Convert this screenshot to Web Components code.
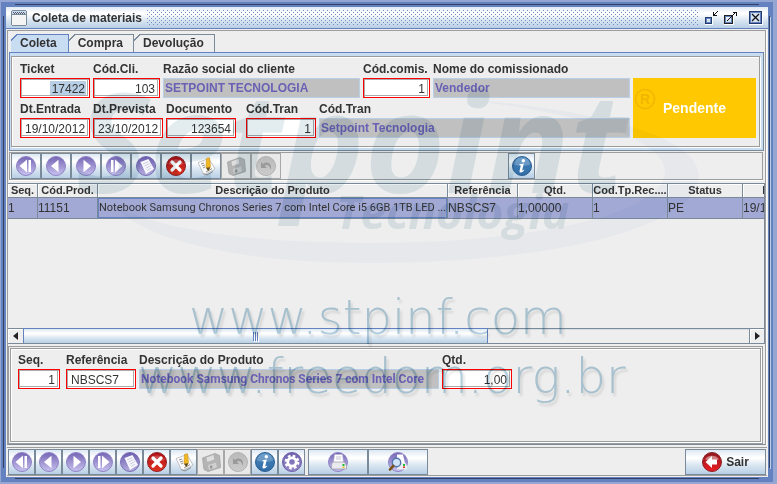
<!DOCTYPE html>
<html lang="pt-BR">
<head>
<meta charset="utf-8">
<title>Coleta de materiais</title>
<style>
:root {
  --edge: #6382bf;
  --slate: #7a8a99;
  --line: #9c9c9c;
  --face: #eeeeee;
  --pale: #c8ddf2;
  --sky: #b8cfe5;
  --ink: #333333;
}
html, body { height: 100%; }
body {
  margin: 0;
  background: #95a6d2;
  color: var(--ink);
  font: 12px "Liberation Sans", Arial, sans-serif;
  overflow: hidden;
}
</style>
</head>
<body>
<coleta-app></coleta-app>

<script>
const define = (name, html, setup) => customElements.define(name, class extends HTMLElement {
  connectedCallback() {
    if (this.shadowRoot) return;
    const root = this.attachShadow({ mode: 'open' });
    const t = document.createElement('template');
    t.innerHTML = typeof html === 'function' ? html(this) : html;
    root.append(t.content.cloneNode(true));
    if (setup) setup(this, root);
  }
});

const disc = (hi, lo, rim) => `
  <defs><linearGradient id="g" x1="0" y1="0" x2="0" y2="1"><stop offset="0" stop-color="${hi}"/><stop offset="1" stop-color="${lo}"/></linearGradient></defs>
  <circle cx="10" cy="10" r="9.5" fill="url(#g)" stroke="${rim}" stroke-width="1"/>`;
const violet = disc('#7565b4', '#c9c2ee', '#8e84c6');
const sheet = '<path d="M4.500 6 12.500 3l5.500 10-8 5z" fill="#f6f8fd"/><path d="M7.200 7.800l5-2M8.500 10l5.200-2.500M9.800 12.300l5.200-2.800M11 14.500l4-2.300" stroke="#b5b6cc" stroke-width=".7"/>';
const icons = {
  first: violet + '<path d="M11 3.500v13L3.500 10z" fill="#fff"/><path d="M12.500 4h2.500v12h-2.500z" fill="#fff"/>',
  prev: violet + '<path d="M12.500 3.800v12.400L5 10z" fill="#fff"/>',
  next: violet + '<path d="M7.500 3.800v12.400L15 10z" fill="#fff"/>',
  last: violet + '<path d="M9 3.500v13l7.500-6.500z" fill="#fff"/><path d="M5 4h2.500v12H5z" fill="#fff"/>',
  sheet: disc('#6a5bad', '#b5addf', '#7a6fb5') + sheet,
  cancel: disc('#b01018', '#e0321e', '#93222a') + '<path d="M2.500 8a8 7 0 0 1 15 0Q10 11 2.500 8z" fill="#fff" opacity=".22"/><path d="M6 6l8 8M14 6l-8 8" stroke="#fff" stroke-width="3.200" stroke-linecap="round"/>',
  edit: '<path d="M2 6.500 13 2.500l6 10.500L8 19z" fill="#fbfbfb" stroke="#b5b5b5" stroke-width=".8"/><path d="M5 8l3-1M6 10l3-1M7 12l2-1M10 16l6-3.500" stroke="#909090"/><path d="M10.500 2.500l3-.8 1 9-2.200 4-2.300-3.400z" fill="#f2b822" stroke="#c98d12" stroke-width=".6"/><path d="M10.200 11.800l2 3.400 2-4z" fill="#5a4a35"/><path d="M7.500 17.500 11 19l6-3.500" stroke="#777" fill="none" stroke-width=".8"/>',
  save: '<path d="M1.500 6 14 1.500l4.500 2 1 12L7 19.500l-4-2z" fill="#b4b4b4" stroke="#a2a2a2" stroke-width=".8"/><path d="M5.500 5.500l7-2.500.8 4.500-7 2.500z" fill="#dedede"/><path d="M7 13l8-2.500.8 5-7.800 2.500z" fill="#cfcfcf"/><path d="M9 14l2-.7.4 2.700-2 .7z" fill="#8f8f8f"/>',
  undo: disc('#b9b9b9', '#cccccc', '#b2b2b2') + '<path d="M5 6v6h6l-2.300-2.200C11 8 14 9 14.500 14 17 8 11 4.500 7 8z" fill="#9a9a9a"/>',
  info: disc('#4a86bf', '#2f6ca6', '#2d5f92') + '<path d="M2 8.500a8 7 0 0 1 16 0Q10 11 2 8.500z" fill="#fff" opacity=".22"/><circle cx="11.300" cy="4.800" r="1.700" fill="#fff"/><path d="M7.500 8.200l4.300-.7-1.600 6.700q0 .8 1.800-.6l.3.600q-1.800 2.200-3.600 2.200-1.500 0-1.200-1.500L8.800 9.500l-1.500-.4z" fill="#fff"/>',
  gear: disc('#6f60b0', '#958ac8', '#6c60a8') + '<g fill="none" stroke="#fff"><circle cx="10" cy="10" r="4.200" stroke-width="2.800"/><circle cx="10" cy="10" r="6.200" stroke-width="2.400" stroke-dasharray="2.600 2.269"/></g>',
  print: violet + '<path d="M6.500 2.500h8l1 8h-10z" fill="#fff" stroke="#b8b4cc" stroke-width=".6"/><path d="M8 5h5M8 7h5" stroke="#b5b5c8" stroke-width=".8"/><path d="M4.500 10h12l2 3.500v3.500h-15v-4z" fill="#e9e9ee" stroke="#9b98a8" stroke-width=".7"/><path d="M14.500 12h2v2h-2z" fill="#1fbd3a"/><path d="M14.500 14.500h2v1.500h-2z" fill="#e8c020"/>',
  preview: violet + '<path d="M9 2.500h6l2 9H9z" fill="#fff"/><path d="M10 11h7.500l1.500 3v3.500H9z" fill="#ececf1"/><circle cx="8.500" cy="10.500" r="4.200" fill="#cfe4f6" stroke="#5474ad" stroke-width="1.400"/><path d="M5.300 13.800 2 17.500" stroke="#7a5312" stroke-width="2.600" stroke-linecap="round"/><path d="M15 12h2v2h-2z" fill="#1fbd3a"/><path d="M15 14.500h2v1.500h-2z" fill="#dd2f2f"/>',
  exit: disc('#8d1820', '#ee1c22', '#8b2028') + '<path d="M3 7.500a7.500 6 0 0 1 14 0Q10 9 3 7.500z" fill="#fff" opacity=".45"/><path d="M3.500 10 10 4v3.500h5v5h-5V16z" fill="#fff"/>'
};

define('glyph-icon', el => `
<style>:host{display:block;width:20px;height:20px}svg{display:block;width:100%;height:100%}</style>
<svg viewBox="0 0 20 20" fill="none" aria-hidden="true">${icons[el.getAttribute('name')]}</svg>`);

define('tool-button', el => `
<style>
:host{display:block;flex:none;width:27px;height:26px}
:host([size=roomy]){width:30px}
:host([size=wide]){width:60px}
:host([size=exit]){width:81px}
button{width:100%;height:100%;box-sizing:border-box;margin:0;padding:0;border:1px solid var(--slate);
 display:flex;align-items:center;justify-content:center;gap:4px;color:inherit;font:bold 12px "Liberation Sans",Arial,sans-serif;
 background:linear-gradient(#dde8f3,#fff 30%,#fff 34%,#dbe7f2 62%,#b8cfe5)}
button:disabled{background:#e9e9e9;border-color:#a8a8a8}
</style>
<button type="button" aria-label="${el.getAttribute('label')}"${el.hasAttribute('disabled') ? ' disabled' : ''}><glyph-icon name="${el.getAttribute('icon')}"></glyph-icon><slot></slot></button>`);

define('form-field', el => {
  const a = n => el.getAttribute(n) || '';
  return `
<style>
:host{display:block;flex:0 0 70px;min-width:0}
:host([size=tiny]){flex-basis:42px}
:host([size=small]){flex-basis:67px}
:host([size=long]){flex-basis:300px}
:host([grow]){flex:1 1 0}
:host([lead]){margin-left:7px}
label{display:block;height:14px;line-height:14px;margin-bottom:2px;font-weight:bold;white-space:nowrap}
input{display:block;width:100%;height:20px;box-sizing:border-box;margin:0;padding:2px 4px 0;border:1px solid #f00;border-radius:0;outline:0;
 background:#fff;color:var(--ink);font:12px "Liberation Sans",Arial,sans-serif;
 box-shadow:inset 1px 1px #aaa,inset -1px -1px #fff,inset -2px -2px #aaa}
:host([numeric]) input{text-align:right}
:host([lookup]) input{border-color:var(--sky);background:#c0c0c0;box-shadow:none;padding:0 1px;color:#6a60b4;font-weight:bold}
:host([size=long]) input{font-family:Roboto,"Liberation Sans",sans-serif}
:host([marked]) input{background:linear-gradient(#b8cfe5,#b8cfe5) right 3px center/36px 14px no-repeat #fff}
</style>
<label for="f">${a('label')}</label>
<input id="f" type="text" value="${a('value')}"${el.hasAttribute('lookup') ? ' readonly' : ''}>`;
});

define('etched-panel', `
<style>
:host{display:block;box-sizing:border-box;border:1px solid var(--line);box-shadow:inset 1px 1px #fff,1px 1px #fff;background:var(--face)}
</style><slot></slot>`);

define('field-row', `
<style>:host{display:flex;gap:3px;margin-bottom:4px}:host(:last-child){margin-bottom:0}</style><slot></slot>`);

define('status-badge', `
<style>:host{flex:0 0 123px;margin-top:16px;display:flex;align-items:center;justify-content:center;background:#ffc800;color:#fff;font:bold 14px "Liberation Sans",Arial,sans-serif}</style><slot></slot>`);

define('title-bar', `
<style>
:host{display:flex;align-items:center;gap:5px;height:21px;padding:0 4px 0 5px;border-bottom:1px solid var(--edge);
 background:linear-gradient(#dfe9f4,#fff 28%,#fff 32%,#dbe7f2 62%,#b8cfe5)}
h1{margin:0;font:bold 12px "Liberation Sans",Arial,sans-serif;white-space:nowrap}
.bumps{flex:1;height:16px;background:
 radial-gradient(circle at 0.5px 0.5px,#6f8cc8 0.6px,transparent 0.7px) 0 0/4px 4px,
 radial-gradient(circle at 0.5px 0.5px,#6f8cc8 0.6px,transparent 0.7px) 2px 2px/4px 4px}
.controls{display:flex;gap:3px}
button{width:16px;height:16px;padding:0;border:0;background:none}
.controls button:last-child{margin-left:6px}
svg{display:block}
</style>
<svg width="16" height="16" viewBox="0 0 16 16" shape-rendering="crispEdges" aria-hidden="true"><path d="M1 0h14v1h1v14h-1v1H1v-1H0V1h1z" fill="#7a8a99"/><path d="M1 1h14v4H1z" fill="#c9dbee"/><path d="M2 2h1v1H2zM4 2h1v1H4zM6 2h1v1H6zM8 2h1v1H8zM10 2h1v1h-1zM12 2h1v1h-1zM3 3h1v1H3zM5 3h1v1H5zM7 3h1v1H7zM9 3h1v1H9zM11 3h1v1h-1zM13 3h1v1h-1z" fill="#556"/><path d="M1 4h14v1H1z" fill="#7a8a99"/><path d="M1 5h14v10H1z" fill="#f4f4f4"/></svg>
<h1><slot></slot></h1>
<div class="bumps"></div>
<div class="controls">
<button type="button" aria-label="Minimizar"><svg width="16" height="16" viewBox="0 0 16 16" shape-rendering="crispEdges" fill="none"><path d="M1.500 7.500h6v6h-6z" stroke="#233b6e"/><path d="M2.500 8.500h4v4h-4z" stroke="#6382bf"/><path d="M1 14.500h8M8.500 7v8" stroke="#fff"/><path d="M9.500 2v3.500H13M10 5l4-4" stroke="#111"/></svg></button>
<button type="button" aria-label="Maximizar"><svg width="16" height="16" viewBox="0 0 16 16" shape-rendering="crispEdges" fill="none"><path d="M1.500 5.500h8v8h-8z" stroke="#222"/><path d="M2.500 6.500h6v6h-6z" stroke="#6382bf"/><path d="M1 14.500h10M10.500 6v9" stroke="#fff"/><path d="M4 11l8-8M10 2.500h3.500V6" stroke="#111"/></svg></button>
<button type="button" aria-label="Fechar"><svg width="16" height="16" viewBox="0 0 16 16" shape-rendering="crispEdges" fill="none"><path d="M1.500 1.500h12v12h-12z" stroke="#233b6e" fill="#d5e3f1"/><path d="M2.500 2.500h10v10h-10z" stroke="#6382bf"/><path d="M1 14.500h14M14.500 2v13" stroke="#fff"/><path d="M4 4l7 7M11 4l-7 7" stroke="#111" stroke-width="1.300" shape-rendering="auto"/></svg></button>
</div>`);

define('tab-strip', `
<style>
:host{display:block;padding:3px 4px 0 3px}
nav{display:flex}
button{--c:var(--slate);--f:#eee;flex:none;height:18px;margin:0;border:0;padding:0 11px 0 9px;color:inherit;font:bold 12px/18px "Liberation Sans",Arial,sans-serif;
 background:
 linear-gradient(135deg,#eee 4px,var(--c) 4px 5px,transparent 5px) 0 0/8px 8px no-repeat,
 linear-gradient(var(--c),var(--c)) 6px 0/100% 1px no-repeat,
 linear-gradient(var(--c),var(--c)) 100% 0/1px 100% no-repeat,
 linear-gradient(var(--f),var(--f))}
button[aria-selected=true]{--c:var(--edge);--f:var(--pale);padding-right:12px;box-shadow:0 1px var(--pale)}
</style>
<nav role="tablist">
<button type="button" role="tab" aria-selected="true">Coleta</button>
<button type="button" role="tab" aria-selected="false">Compra</button>
<button type="button" role="tab" aria-selected="false">Devolução</button>
</nav>`);

define('button-row', `
<style>:host{display:flex}</style><slot></slot>`);

define('data-grid', `
<style>
:host{display:block;flex:1;min-height:0;overflow:hidden;border-right:1px solid var(--slate);border-top:1px solid var(--slate)}
table{width:810px;table-layout:fixed;border-collapse:separate;border-spacing:0}
th,td{box-sizing:border-box;overflow:hidden;white-space:nowrap;padding:0;border:0 solid var(--slate);border-width:0 1px 1px 0}
th{height:14px;font:bold 11px/13px "Liberation Sans",Arial,sans-serif;box-shadow:inset 1px 1px #fff}
td{height:21px;background:#a2a9d5;line-height:20px}
td.cursor{box-shadow:inset 0 0 0 1px var(--edge);padding:0 1px;font-family:Roboto,"Liberation Sans",sans-serif;font-size:11px}
</style>
<table>
<colgroup><col style="width:30px"><col style="width:60px"><col style="width:350px"><col style="width:70px"><col style="width:75px"><col style="width:75px"><col style="width:75px"><col style="width:75px"></colgroup>
<thead><tr><th>Seq.</th><th>Cód.Prod.</th><th>Descrição do Produto</th><th>Referência</th><th>Qtd.</th><th>Cod.Tp.Rec....</th><th>Status</th><th>Dt.Ent.</th></tr></thead>
<tbody><tr><td>1</td><td>11151</td><td class="cursor">Notebook Samsung Chronos Series 7 com Intel Core i5 6GB 1TB LED ...</td><td>NBSCS7</td><td>1,00000</td><td>1</td><td>PE</td><td>19/10/2012</td></tr></tbody>
</table>`);

define('scroll-track', `
<style>
:host{display:flex;height:16px;box-sizing:border-box;border:1px solid var(--slate);border-left:0}
button{flex:0 0 15px;padding:0;border:0;background:var(--face);display:flex;align-items:center;justify-content:center;box-shadow:inset 1px 1px #fff}
button:first-child{border-right:1px solid var(--slate)}
button:last-child{border-left:1px solid var(--slate)}
.track{flex:1;display:flex;box-shadow:inset 0 1px #d5dde5}
.thumb{width:64%;margin-top:-1px;border:1px solid var(--edge);border-bottom:0;box-sizing:border-box;display:flex;align-items:center;justify-content:center;gap:1px;
 background:linear-gradient(#dde8f3,#fff 30%,#fff 34%,#dbe7f2 62%,#b8cfe5)}
i{width:1px;height:9px;background:var(--edge);box-shadow:1px 1px #fff}
</style>
<button type="button" aria-label="Rolar para a esquerda"><svg width="5" height="8" viewBox="0 0 5 8"><path d="M5 0v8L0 4z" fill="#222"/></svg></button>
<div class="track"><div class="thumb"><i></i><i></i><i></i></div></div>
<button type="button" aria-label="Rolar para a direita"><svg width="5" height="8" viewBox="0 0 5 8"><path d="M0 0v8l5-4z" fill="#222"/></svg></button>`);

define('site-watermark', `
<style>
:host{position:absolute;inset:0;pointer-events:none;mix-blend-mode:multiply}
svg{display:block;width:100%;height:100%}
.logo{font-family:"Open Sans","Noto Sans",sans-serif;font-weight:bold;font-style:italic;fill:#e3ecef}
.url{font-family:"DejaVu Sans Light","DejaVu Sans",sans-serif;font-weight:200;font-size:48px;fill:#b4cfdd;filter:drop-shadow(2px 3px 1px #e2e2e2)}
.mark{font:bold 14px "Liberation Sans",sans-serif;fill:#efead6}
</style>
<svg viewBox="0 0 777 484" aria-hidden="true">
<path d="M443 98C560 104 699 130 699 176C699 225 560 263 370 263C255 263 150 245 112 205C165 232 260 243 370 243C540 243 665 212 665 172C665 135 560 108 443 98z" fill="#f7f9fd"/>
<text class="logo" x="76" y="193" font-size="138">Setpoint</text>
<text class="logo" x="336" y="229" font-size="46">Tecnologia</text>
<circle cx="645" cy="99" r="9.500" fill="none" stroke="#efead6" stroke-width="1.500"/>
<text class="mark" x="645" y="104" text-anchor="middle">R</text>
<text class="url" x="189" y="334">www.stpinf.com</text>
<text class="url" x="138" y="393">www.freedom.org.br</text>
</svg>`);

const nav = size => `
<tool-button size="${size}" icon="first" label="Primeiro"></tool-button>
<tool-button size="${size}" icon="prev" label="Anterior"></tool-button>
<tool-button size="${size}" icon="next" label="Próximo"></tool-button>
<tool-button size="${size}" icon="last" label="Último"></tool-button>
<tool-button size="${size}" icon="sheet" label="Novo"></tool-button>
<tool-button size="${size}" icon="cancel" label="Excluir"></tool-button>
<tool-button size="${size}" icon="edit" label="Editar"></tool-button>
<tool-button size="${size}" icon="save" label="Salvar" disabled></tool-button>
<tool-button size="${size}" icon="undo" label="Cancelar" disabled></tool-button>`;

define('coleta-app', `
<style>
:host{display:block;position:relative;height:100vh;box-sizing:border-box;padding:2px 4px 2px 1px}
.frame{height:100%;box-sizing:border-box;padding:5px;display:flex;flex-direction:column;background:
 linear-gradient(#33405f,#33405f) 14px 2px/calc(100% - 28px) 1px no-repeat,
 linear-gradient(#33405f,#33405f) 14px calc(100% - 3px)/calc(100% - 28px) 1px no-repeat,
 linear-gradient(#33405f,#33405f) 2px 14px/1px calc(100% - 28px) no-repeat,
 linear-gradient(#33405f,#33405f) calc(100% - 3px) 14px/1px calc(100% - 28px) no-repeat,
 linear-gradient(#b8cfe5,#b8cfe5) calc(100% - 2px) 15px/1px calc(100% - 28px) no-repeat,
 var(--edge)}
.client{flex:1;min-height:0;display:flex;flex-direction:column;background:var(--face);padding:1px}
.upper{flex:1;min-height:0;display:flex;flex-direction:column;border:1px solid var(--line);border-bottom-color:var(--slate);margin-right:1px;box-shadow:1px 0 #fff}
.tabbody{border:1px solid var(--edge);border-right-color:var(--slate);border-bottom-color:var(--slate);margin:0 1px;padding:3px 3px 3px 1px;background:var(--pale)}
.tabbody etched-panel{padding:5px 3px 8px 8px}
.form{display:flex;gap:3px}
.rows{flex:1;min-width:0}
.tools{display:flex;margin:1px 2px 1px 1px;border:1px solid var(--line);padding:0 0 0 1px;box-shadow:0 1px #fff}
.tools button-row+button-row{margin-left:227px}
.gridbox{flex:1;min-height:0;display:flex;flex-direction:column;margin-top:2px}
.lower{flex:none;margin-top:2px;border:1px solid var(--line);padding:1px;height:98px;box-sizing:border-box;margin-right:2px}
.lower etched-panel{height:100%;padding:4px 7px}
.bar{display:flex;margin-top:2px;padding:1px 1px 0 1px;border-top:1px solid var(--line);border-bottom:1px solid var(--line)}
.bar .print{margin-left:3px}
.bar .exit{margin-left:auto}
</style>
<main class="frame">
<title-bar>Coleta de materiais</title-bar>
<div class="client">
 <section class="upper">
  <tab-strip></tab-strip>
  <div class="tabbody"><etched-panel><div class="form">
   <div class="rows">
    <field-row>
     <form-field label="Ticket" value="17422" numeric marked></form-field>
     <form-field size="small" label="Cód.Cli." value="103" numeric></form-field>
     <form-field grow lookup label="Razão social do cliente" value="SETPOINT TECNOLOGIA"></form-field>
     <form-field size="small" label="Cód.comis." value="1" numeric></form-field>
     <form-field grow lookup label="Nome do comissionado" value="Vendedor"></form-field>
    </field-row>
    <field-row>
     <form-field label="Dt.Entrada" value="19/10/2012" numeric></form-field>
     <form-field label="Dt.Prevista" value="23/10/2012" numeric></form-field>
     <form-field label="Documento" value="123654" numeric></form-field>
     <form-field lead label="Cód.Tran" value="1" numeric></form-field>
     <form-field grow lookup label="Cód.Tran" value="Setpoint Tecnologia"></form-field>
    </field-row>
   </div>
   <status-badge>Pendente</status-badge>
  </div></etched-panel></div>
  <div class="tools"><button-row>${nav('roomy')}</button-row><button-row><tool-button icon="info" label="Informações"></tool-button></button-row></div>
  <div class="gridbox"><data-grid></data-grid><scroll-track></scroll-track></div>
  <div class="lower"><etched-panel><field-row>
   <form-field size="tiny" label="Seq." value="1" numeric></form-field>
   <form-field style="margin-left:3px" label="Referência" value="NBSCS7"></form-field>
   <form-field size="long" lookup label="Descrição do Produto" value="Notebook Samsung Chronos Series 7 com Intel Core"></form-field>
   <form-field label="Qtd." value="1,00" numeric></form-field>
  </field-row></etched-panel></div>
 </section>
 <div class="bar"><button-row>${nav('snug')}
  <tool-button icon="info" label="Informações"></tool-button><tool-button icon="gear" label="Configurações"></tool-button></button-row>
  <button-row class="print"><tool-button size="wide" icon="print" label="Imprimir"></tool-button><tool-button size="wide" icon="preview" label="Visualizar impressão"></tool-button></button-row>
  <tool-button class="exit" size="exit" icon="exit" label="Sair">Sair</tool-button>
 </div>
</div>
</main>
<site-watermark></site-watermark>`);
</script>
</body>
</html>
